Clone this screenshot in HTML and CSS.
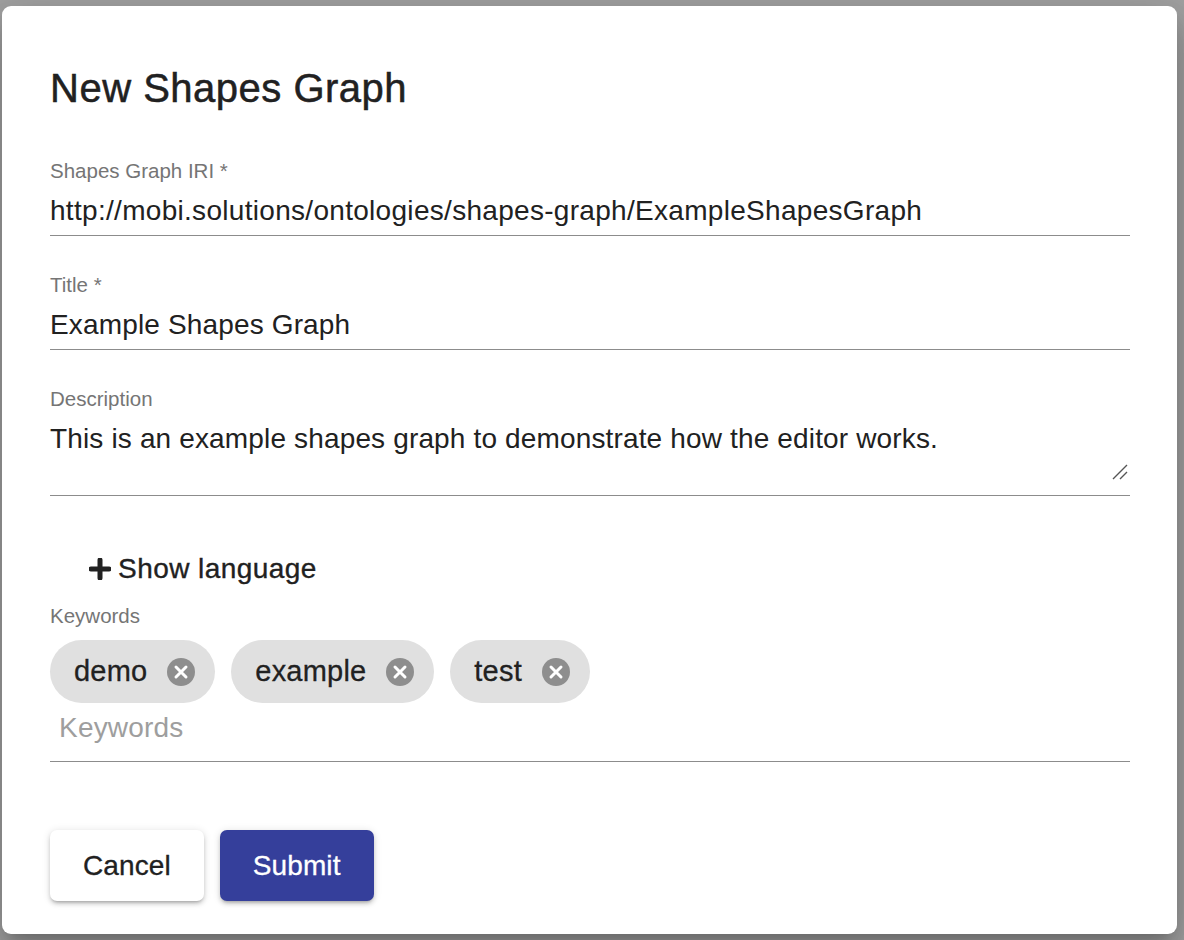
FILE: index.html
```html
<!DOCTYPE html>
<html lang="en">
<head>
<meta charset="utf-8">
<title>New Shapes Graph</title>
<link rel="stylesheet" href="styles.css">
</head>
<body>
<div class="overlay">
  <div class="dialog">
    <h2 class="title">New Shapes Graph</h2>

    <div class="field field-first">
      <div class="label">Shapes Graph IRI *</div>
      <div class="value value-iri">http://mobi.solutions/ontologies/shapes-graph/ExampleShapesGraph</div>
    </div>

    <div class="field">
      <div class="label">Title *</div>
      <div class="value">Example Shapes Graph</div>
    </div>

    <div class="field">
      <div class="label">Description</div>
      <div class="value value-area">This is an example shapes graph to demonstrate how the editor works.
        <svg class="resize" width="16" height="16" viewBox="0 0 16 16"><path d="M1 15 L15 1 M8 15 L15 8" stroke="#555" stroke-width="1.4" fill="none"/></svg>
      </div>
    </div>

    <div class="lang-row">
      <span class="lang-btn">
        <svg class="plus" width="22" height="22" viewBox="0 0 22 22"><path d="M11 2 V20 M2 11 H20" stroke="#212121" stroke-width="5" stroke-linecap="round"/></svg>
        <span>Show language</span>
      </span>
    </div>

    <div class="field kw-field">
      <div class="label">Keywords</div>
      <div class="chips">
        <span class="chip"><span class="chip-text">demo</span><span class="chip-x"><svg width="30" height="30" viewBox="0 0 30 30"><circle cx="15" cy="15" r="14" fill="#8e8e8e"/><path d="M10 10 L20 20 M20 10 L10 20" stroke="#fff" stroke-width="3" stroke-linecap="round"/></svg></span></span>
        <span class="chip"><span class="chip-text">example</span><span class="chip-x"><svg width="30" height="30" viewBox="0 0 30 30"><circle cx="15" cy="15" r="14" fill="#8e8e8e"/><path d="M10 10 L20 20 M20 10 L10 20" stroke="#fff" stroke-width="3" stroke-linecap="round"/></svg></span></span>
        <span class="chip"><span class="chip-text">test</span><span class="chip-x"><svg width="30" height="30" viewBox="0 0 30 30"><circle cx="15" cy="15" r="14" fill="#8e8e8e"/><path d="M10 10 L20 20 M20 10 L10 20" stroke="#fff" stroke-width="3" stroke-linecap="round"/></svg></span></span>
      </div>
      <div class="placeholder">Keywords</div>
    </div>

    <div class="actions">
      <button class="btn btn-cancel">Cancel</button>
      <button class="btn btn-submit">Submit</button>
    </div>
  </div>
</div>
</body>
</html>
```

FILE: styles.css
```css
* { box-sizing: border-box; }

html, body {
  margin: 0;
  padding: 0;
  background: #a2a2a2;
  font-family: "Liberation Sans", Arial, Helvetica, sans-serif;
  color: #212121;
}

.overlay {
  width: 1184px;
  height: 940px;
  padding: 6px 0 0 2px;
  overflow: hidden;
}

.dialog {
  width: 1175px;
  height: 928px;
  background: #fff;
  border-radius: 9px;
  padding: 58px 47px 0 48px;
  display: flex;
  flex-direction: column;
  box-shadow: 0 11px 15px -7px rgba(0,0,0,.2), 0 24px 38px 3px rgba(0,0,0,.14), 0 9px 46px 8px rgba(0,0,0,.12);
}

.title {
  margin: 0;
  font-size: 40px;
  line-height: 48px;
  font-weight: 500;
  -webkit-text-stroke: 0.5px #212121;
  letter-spacing: 0.5px;
}

.field {
  margin-top: 37px;
  border-bottom: 1px solid #8c8c8c;
  padding-bottom: 8px;
}

.field-first { margin-top: 47px; }

.label {
  font-size: 20.5px;
  line-height: 24px;
  color: #757575;
}

.value {
  margin-top: 12px;
  font-size: 28px;
  line-height: 32px;
  letter-spacing: 0.15px;
  color: #212121;
}

.value-iri { letter-spacing: 0.3px; }

.value-area {
  position: relative;
  height: 64px;
}

.resize {
  position: absolute;
  right: 2px;
  bottom: 7px;
}

.lang-row {
  margin-top: 55px;
  display: flex;
}

.lang-btn {
  display: inline-flex;
  align-items: center;
  height: 36px;
  padding-left: 39px;
  font-size: 28px;
  font-weight: 500;
  letter-spacing: 0.45px;
  -webkit-text-stroke: 0.35px #212121;
}

.plus { margin-right: 7px; }

.kw-field {
  margin-top: 17px;
  padding-bottom: 17px;
}

.chips {
  margin-top: 12px;
  display: flex;
  gap: 16px;
}

.chip {
  display: inline-flex;
  align-items: center;
  height: 63px;
  border-radius: 32px;
  background: #e0e0e0;
  padding: 0 19px 0 24px;
  font-size: 29px;
  letter-spacing: 0.2px;
  -webkit-text-stroke: 0.3px #212121;
}

.chip-x {
  display: flex;
  margin-left: 19px;
}

.placeholder {
  margin-top: 9px;
  padding-left: 9px;
  font-size: 28px;
  line-height: 32px;
  letter-spacing: 0.2px;
  color: #9e9e9e;
}

.actions {
  margin-top: 68px;
  display: flex;
  gap: 16px;
}

.btn {
  height: 71px;
  border: none;
  border-radius: 7px;
  padding: 0 33px;
  font-family: "Liberation Sans", Arial, Helvetica, sans-serif;
  font-size: 28px;
  font-weight: 500;
  letter-spacing: 0.1px;
}

.btn-cancel {
  background: #fff;
  color: #212121;
  -webkit-text-stroke: 0.3px #212121;
  box-shadow: 0 3px 3px -2px rgba(0,0,0,.2), 0 3px 4px 0 rgba(0,0,0,.14), 0 1px 8px 0 rgba(0,0,0,.12);
}

.btn-submit {
  background: #353f9b;
  color: #fff;
  -webkit-text-stroke: 0.3px #fff;
  box-shadow: 0 3px 3px -2px rgba(0,0,0,.2), 0 3px 4px 0 rgba(0,0,0,.14), 0 1px 8px 0 rgba(0,0,0,.12);
}
```
